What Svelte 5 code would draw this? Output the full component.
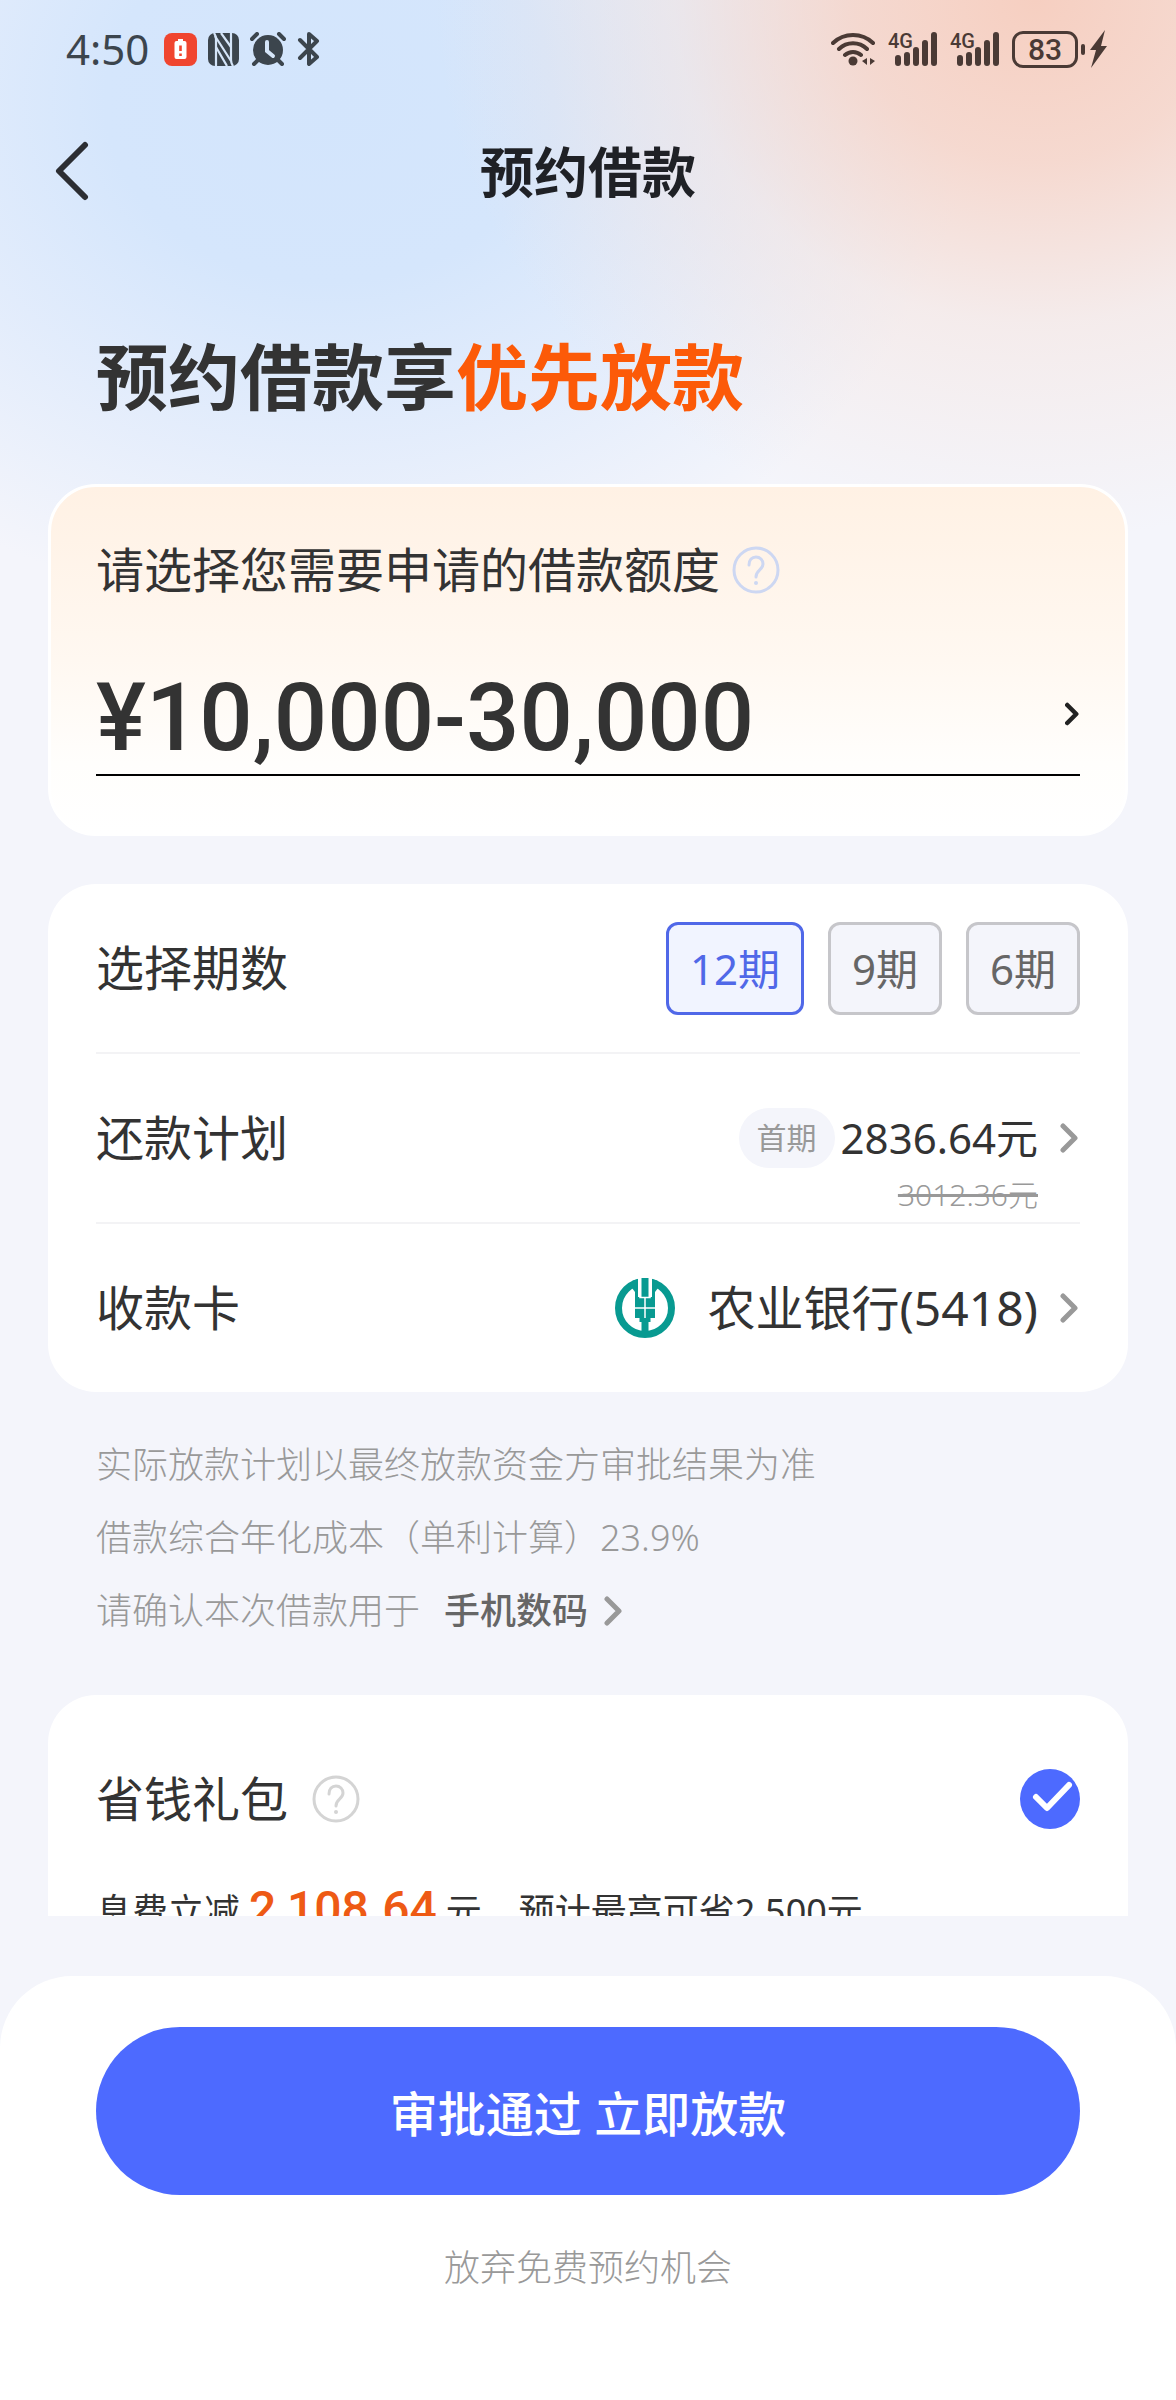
<script>
	let periods = [12, 9, 6];
	let period = 12;
	let giftChecked = true;
</script>

{#snippet arrow(cls)}
	<svg class="arrow {cls}" viewBox="0 0 20 32" aria-hidden="true">
		<path d="M3 4l12 12L3 28" />
	</svg>
{/snippet}

{#snippet help()}
	<svg viewBox="0 0 48 48" aria-hidden="true">
		<circle cx="24" cy="24" r="22" />
		<path d="M17 19c0-5 3-8 7-8s7 3 7 7c0 6-7 6-7 13" />
		<circle class="dot" cx="24" cy="37" r="2" />
	</svg>
{/snippet}

{#snippet signal()}
	<svg class="signal" viewBox="0 -6 50 46" aria-hidden="true">
		<text x="0" y="16">4G</text>
		<path d="M10 26v5M19 23v8M28 18v13M37 11v20M46 3v28" />
	</svg>
{/snippet}

<div class="page">
	<div class="scroll">
		<div class="status">
			<span class="time">4:50</span>
			<svg width="33" height="33" viewBox="0 0 33 33" aria-hidden="true">
				<rect width="33" height="33" rx="8" fill="#f0452f" />
				<path d="M14 6h5v2h1.500q2 0 2 2v14q0 2-2 2h-8q-2 0-2-2V10q0-2 2-2H14z" fill="#fff" />
				<path d="M16.500 12.500v5.500M16.500 20.500v2.500" stroke="#f0452f" stroke-width="2.600" />
			</svg>
			<svg width="31" height="33" viewBox="0 0 31 33" aria-hidden="true">
				<rect width="31" height="33" rx="7" fill="#3c454d" />
				<path d="M6 0q2 3 2 6v27M25 33q-2-3-2-6V0" fill="none" stroke="#d5e5f8" stroke-width="2.200" />
				<path d="M7 3l16 25M13 0l10 14M8 14l11 19" fill="none" stroke="#d5e5f8" stroke-width="2.200" />
			</svg>
			<svg class="alarm" width="36" height="34" viewBox="0 0 36 34" aria-hidden="true">
				<circle cx="18" cy="18" r="15" fill="#3c454d" />
				<path d="M2 7l5-5M34 7l-5-5M8 28l-4 4M28 28l4 4" stroke="#3c454d" />
				<path d="M17 10v9l6 5" stroke="#d5e5f8" />
			</svg>
			<svg class="bluetooth" width="24" height="34" viewBox="0 0 24 34" aria-hidden="true">
				<path d="M3 8l17 17-8 7V2l8 7L3 26" />
			</svg>
			<div class="status-right">
				<svg class="wifi" width="45" height="34" viewBox="0 0 45 34" aria-hidden="true">
					<path d="M2 11a29 29 0 0 1 40 0M8 17a20 20 0 0 1 28 0M14 23a12 12 0 0 1 16 0" />
					<circle cx="22" cy="29" r="4.500" />
					<path class="fill" d="M36 26v7l-5-4zM39 26v7l5-4z" />
				</svg>
				{@render signal()}
				{@render signal()}
				<div class="battery"><span>83</span></div>
				<svg class="bolt" width="18" height="38" viewBox="0 0 18 38" aria-hidden="true">
					<path d="M15 0L0 20h6L1 38l16-22h-6z" />
				</svg>
			</div>
		</div>

		<header>
			<button class="back" aria-label="返回">
				<svg width="36" height="62" viewBox="0 0 36 62" aria-hidden="true">
					<path d="M31 4L5 30l26 26" />
				</svg>
			</button>
			<h1>预约借款</h1>
		</header>

		<h2>预约借款享<em>优先放款</em></h2>

		<main>
			<section class="card quota">
				<div class="quota-label">
					<span>请选择您需要申请的借款额度</span>
					<button class="help blue" aria-label="额度说明">{@render help()}</button>
				</div>
				<button class="amount">
					<span>¥10,000-30,000</span>
					{@render arrow("dark")}
				</button>
			</section>

			<section class="card rows">
				<div class="row">
					<span class="label">选择期数</span>
					<div class="periods">
						{#each periods as p}
							<button class:active={p === period} on:click={() => (period = p)}>{p}期</button>
						{/each}
					</div>
				</div>
				<div class="row">
					<span class="label">还款计划</span>
					<button class="plan">
						<span class="tag">首期</span>
						<span class="price">2836.64元</span>
						{@render arrow("")}
						<del>3012.36元</del>
					</button>
				</div>
				<div class="row">
					<span class="label">收款卡</span>
					<button class="bank">
						<svg width="60" height="60" viewBox="0 0 60 60" aria-hidden="true">
							<circle cx="30" cy="30" r="26.500" fill="none" stroke="#089a91" stroke-width="7" />
							<path d="M23 0h14v10H23z" fill="#fff" />
							<path d="M17 3l6-2v18h3.500V0h7v19H37V1l6 2v7l-3 4v26h-4.500v4h-2v14h-7V44h-2v-4H20V14l-3-4z" fill="#089a91" />
							<path d="M25 0v19.500h10V0M30 19.500V40M20 30h20" fill="none" stroke="#fff" stroke-width="1.500" />
						</svg>
						<span>农业银行(5418)</span>
						{@render arrow("")}
					</button>
				</div>
			</section>

			<div class="notes">
				<p>实际放款计划以最终放款资金方审批结果为准</p>
				<p>借款综合年化成本（单利计算）23.9%</p>
				<p>
					请确认本次借款用于
					<button class="purpose">手机数码 {@render arrow("")}</button>
				</p>
			</div>

			<section class="card gift">
				<div class="gift-head">
					<label for="gift">省钱礼包</label>
					<button class="help" aria-label="礼包说明">{@render help()}</button>
					<div class="check">
						<input id="gift" type="checkbox" bind:checked={giftChecked} />
						<svg viewBox="0 0 60 60" aria-hidden="true"><path d="M16 28l11 11 22-23" /></svg>
					</div>
				</div>
				<p>
					<span>息费立减</span>
					<strong>2,108.64</strong>
					<span>元</span>
					<span class="most">预计最高可省2,500元</span>
				</p>
			</section>
		</main>
	</div>

	<footer>
		<button class="submit">审批通过 立即放款</button>
		<button class="skip">放弃免费预约机会</button>
	</footer>
</div>

<style>
	:global(body) {
		background: #f4f5fb;
	}

	.page {
		display: flex;
		flex-direction: column;
		height: 100vh;
		color: #333;
		font-family: "Noto Sans", "Noto Sans CJK SC", sans-serif;
		background:
			radial-gradient(ellipse 600px 540px at 88% 0, #f6cfc1 0%, rgba(246, 210, 197, 0.8) 30%, rgba(245, 226, 220, 0.5) 60%, rgba(244, 245, 251, 0) 100%),
			radial-gradient(ellipse 640px 520px at 28% 100px, #d3e5fc 0%, #d5e6fc 35%, rgba(220, 233, 252, 0.7) 65%, rgba(244, 245, 251, 0) 100%),
			#f4f5fb;
	}

	.scroll {
		flex: 1;
		min-height: 0;
		overflow: hidden;
	}

	button {
		margin: 0;
		padding: 0;
		border: 0;
		background: none;
		color: inherit;
		font: inherit;
		cursor: pointer;
	}

	svg {
		flex: none;
		display: block;
	}

	p,
	h1,
	h2 {
		margin: 0;
	}

	/* status bar */
	.status {
		display: flex;
		align-items: center;
		gap: 11px;
		height: 98px;
		padding: 0 68px 0 66px;
		color: #3c454d;
	}

	.time {
		margin-right: 4px;
		font-size: 42px;
		line-height: 60px;
	}

	.alarm path {
		fill: none;
		stroke-width: 4;
		stroke-linecap: round;
	}

	.bluetooth path {
		fill: none;
		stroke: #3c454d;
		stroke-width: 4;
		stroke-linecap: round;
		stroke-linejoin: round;
	}

	.status-right {
		display: flex;
		align-items: center;
		gap: 12px;
		margin-left: auto;
		color: #4a3a35;
	}

	.wifi path {
		fill: none;
		stroke: #4a3a35;
		stroke-width: 4;
		stroke-linecap: round;
	}

	.wifi circle,
	.wifi .fill,
	.bolt path {
		fill: #4a3a35;
		stroke: none;
	}

	.signal {
		width: 50px;
		height: 46px;
	}

	.signal text {
		fill: #4a3a35;
		font: 500 20px Roboto, sans-serif;
	}

	.signal path {
		fill: none;
		stroke: #4a3a35;
		stroke-width: 6;
		stroke-linecap: round;
	}

	.battery {
		position: relative;
		box-sizing: border-box;
		width: 66px;
		height: 37px;
		border: 3px solid #4a3a35;
		border-radius: 11px;
		font: 500 30px/31px Roboto, sans-serif;
		text-align: center;
	}

	.battery::after {
		content: "";
		position: absolute;
		top: 10px;
		right: -10px;
		width: 4px;
		height: 11px;
		border-radius: 2px;
		background: #4a3a35;
	}

	/* title bar */
	header {
		display: grid;
		grid-template-columns: 96px 1fr 96px;
		align-items: center;
		height: 148px;
	}

	.back {
		padding-left: 54px;
	}

	.back path {
		fill: none;
		stroke: #2c2e33;
		stroke-width: 6;
		stroke-linecap: round;
		stroke-linejoin: round;
	}

	h1 {
		color: #1f2126;
		font-size: 54px;
		font-weight: 700;
		line-height: 72px;
		text-align: center;
	}

	h2 {
		padding: 76px 96px 54px;
		font-size: 72px;
		font-weight: 700;
		line-height: 108px;
	}

	h2 em {
		color: #fc5a08;
		font-style: normal;
	}

	/* cards */
	main {
		padding: 0 48px;
	}

	.card {
		padding: 0 48px;
		border-radius: 48px;
		background: #fff;
	}

	.quota {
		box-sizing: border-box;
		padding: 47px 45px 57px;
		border: 3px solid #fff;
		background: linear-gradient(#fff1e4, #fff8f1 50%, #fffefc 80%, #fff);
	}

	.quota-label {
		display: flex;
		align-items: center;
		gap: 12px;
		font-size: 48px;
		line-height: 72px;
	}

	.help svg {
		width: 48px;
		height: 48px;
		fill: none;
		stroke: #d4d4d4;
		stroke-width: 3;
		stroke-linecap: round;
	}

	.help .dot {
		fill: #d4d4d4;
		stroke: none;
	}

	.blue svg {
		stroke: #cdd7f2;
	}

	.blue .dot {
		fill: #cdd7f2;
	}

	.amount {
		display: flex;
		align-items: center;
		justify-content: space-between;
		width: 100%;
		margin-top: 48px;
		border-bottom: 2px solid #000;
		font: 500 94px/112px Roboto, sans-serif;
	}

	.amount span {
		padding-top: 8px;
	}

	.arrow {
		width: 20px;
		height: 32px;
		fill: none;
		stroke: #999;
		stroke-width: 5;
		stroke-linecap: round;
		stroke-linejoin: round;
	}

	.arrow.dark {
		width: 15px;
		height: 24px;
		stroke: #222;
		stroke-width: 6;
	}

	.rows {
		margin-top: 48px;
	}

	.row {
		display: flex;
		align-items: center;
		justify-content: space-between;
		height: 168px;
		border-bottom: 2px solid #f3f3f5;
	}

	.row:last-child {
		border-bottom: 0;
	}

	.label {
		font-size: 48px;
		line-height: 72px;
	}

	.periods {
		display: flex;
		gap: 24px;
	}

	.periods button {
		padding: 12px 21px;
		border: 3px solid #c6c6ca;
		border-radius: 12px;
		background: #f4f5fb;
		color: #666;
		font-size: 42px;
		line-height: 63px;
	}

	.periods .active {
		border-color: #5068e8;
		background: #f1f4ff;
		color: #5068e8;
	}

	.plan {
		display: grid;
		grid-template-columns: auto auto 20px;
		grid-template-rows: 1fr 60px 1fr;
		align-items: center;
		height: 100%;
	}

	.plan > * {
		grid-row: 2;
	}

	.tag {
		margin-right: 6px;
		padding: 0 18px;
		border-radius: 30px;
		background: #f4f5fb;
		color: #999;
		font-size: 30px;
		line-height: 60px;
	}

	.price {
		margin-right: 22px;
		font-size: 42px;
		line-height: 60px;
	}

	.plan del {
		grid-row: 3;
		grid-column: 1 / 3;
		margin-right: 22px;
		color: #999;
		font-size: 30px;
		font-weight: 300;
		line-height: 48px;
		text-align: right;
	}

	.bank {
		display: flex;
		align-items: center;
		font-size: 48px;
		line-height: 72px;
	}

	.bank span {
		margin: 0 22px 0 32px;
	}

	.notes {
		padding: 36px 48px 48px;
		color: #999;
		font-size: 36px;
		font-weight: 300;
		line-height: 73px;
	}

	.notes p {
		display: flex;
		gap: 24px;
	}

	.purpose {
		display: flex;
		align-items: center;
		gap: 16px;
		color: #666;
		font-weight: 500;
	}

	.gift {
		padding-top: 68px;
	}

	.gift-head {
		display: flex;
		align-items: center;
		gap: 24px;
		font-size: 48px;
		line-height: 72px;
	}

	.check {
		display: grid;
		margin-left: auto;
	}

	.check > * {
		grid-area: 1 / 1;
		width: 60px;
		height: 60px;
		margin: 0;
	}

	.check input {
		appearance: none;
		border-radius: 50%;
		background: #d4d4d4;
	}

	.check input:checked {
		background: #4d6aff;
	}

	.check svg {
		fill: none;
		stroke: #fff;
		stroke-width: 6;
		stroke-linecap: round;
		stroke-linejoin: round;
		pointer-events: none;
	}

	.gift p {
		display: flex;
		align-items: baseline;
		gap: 9px;
		margin-top: 38px;
		padding-bottom: 48px;
		font-size: 36px;
		line-height: 72px;
	}

	.gift strong {
		color: #ee5a14;
		font-family: Roboto, sans-serif;
		font-size: 48px;
		font-weight: 500;
	}

	.most {
		margin-left: 28px;
	}

	/* bottom bar */
	footer {
		display: flex;
		flex-direction: column;
		gap: 36px;
		margin-top: 60px;
		padding: 51px 96px 96px;
		border-radius: 72px 72px 0 0;
		background: #fff;
	}

	.submit {
		height: 168px;
		border-radius: 84px;
		background: #4d6aff;
		color: #fff;
		font-size: 48px;
		font-weight: 500;
	}

	.skip {
		color: #999;
		font-size: 36px;
		font-weight: 300;
		line-height: 73px;
	}
</style>
